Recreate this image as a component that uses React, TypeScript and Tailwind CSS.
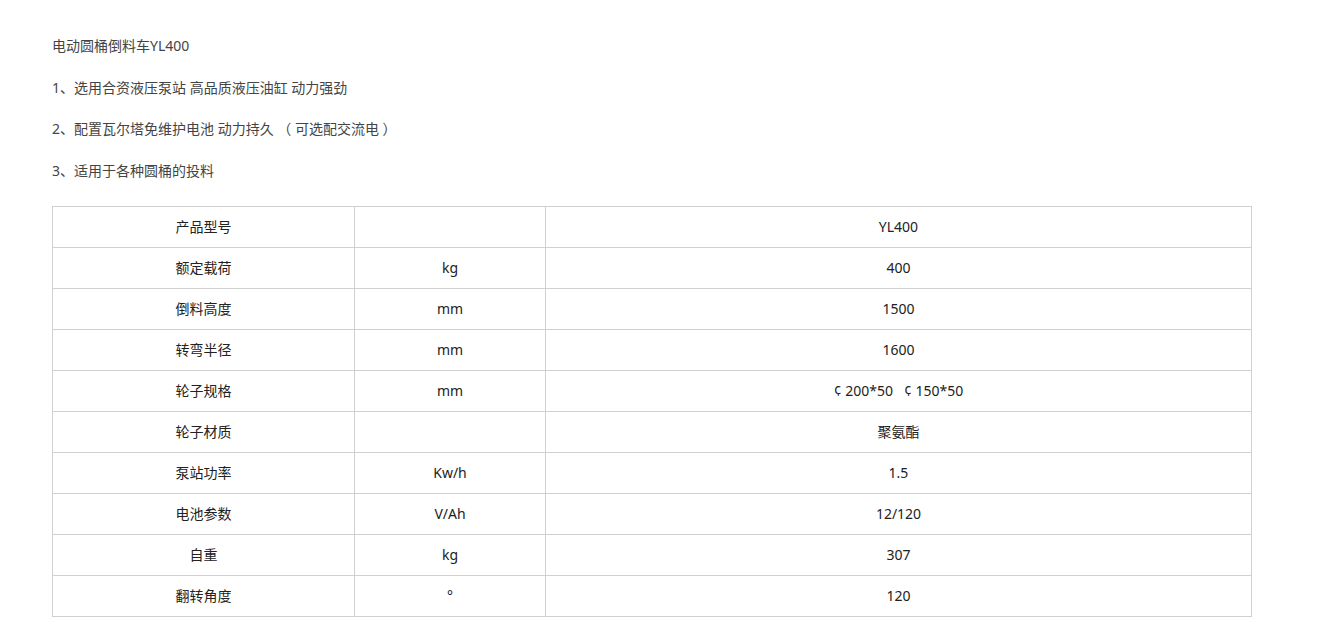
const rows: [string, string, string][] = [
  ["产品型号", "", "YL400"],
  ["额定载荷", "kg", "400"],
  ["倒料高度", "mm", "1500"],
  ["转弯半径", "mm", "1600"],
  ["轮子规格", "mm", "¢ 200*50   ¢ 150*50"],
  ["轮子材质", "", "聚氨酯"],
  ["泵站功率", "Kw/h", "1.5"],
  ["电池参数", "V/Ah", "12/120"],
  ["自重", "kg", "307"],
  ["翻转角度", "°", "120"],
]

const intro = [
  "电动圆桶倒料车YL400",
  "1、选用合资液压泵站 高品质液压油缸 动力强劲",
  "2、配置瓦尔塔免维护电池 动力持久 （ 可选配交流电 ）",
  "3、适用于各种圆桶的投料",
]

export default function App() {
  return (
    <div className="min-h-screen bg-white pl-[52px] pt-[35px] font-['Noto_Sans','Noto_Sans_CJK_SC',sans-serif] text-[14px]">
      <div className="flex flex-col gap-[20.5px] text-[#444]">
        {intro.map((line) => (
          <p key={line} className="leading-[21px] whitespace-pre">
            {line}
          </p>
        ))}
      </div>

      <table className="mt-[25px] w-[1200px] border-collapse border border-[#d0d0d0] text-[#222]">
        <colgroup>
          <col className="w-[302px]" />
          <col className="w-[191px]" />
          <col />
        </colgroup>
        <tbody>
          {rows.map((r) => (
            <tr key={r[0]} className="h-[41px]">
              {r.map((c, i) => (
                <td key={i} className="border border-[#d0d0d0] p-0 text-center leading-[20px] whitespace-pre">
                  {c}
                </td>
              ))}
            </tr>
          ))}
        </tbody>
      </table>
    </div>
  )
}
